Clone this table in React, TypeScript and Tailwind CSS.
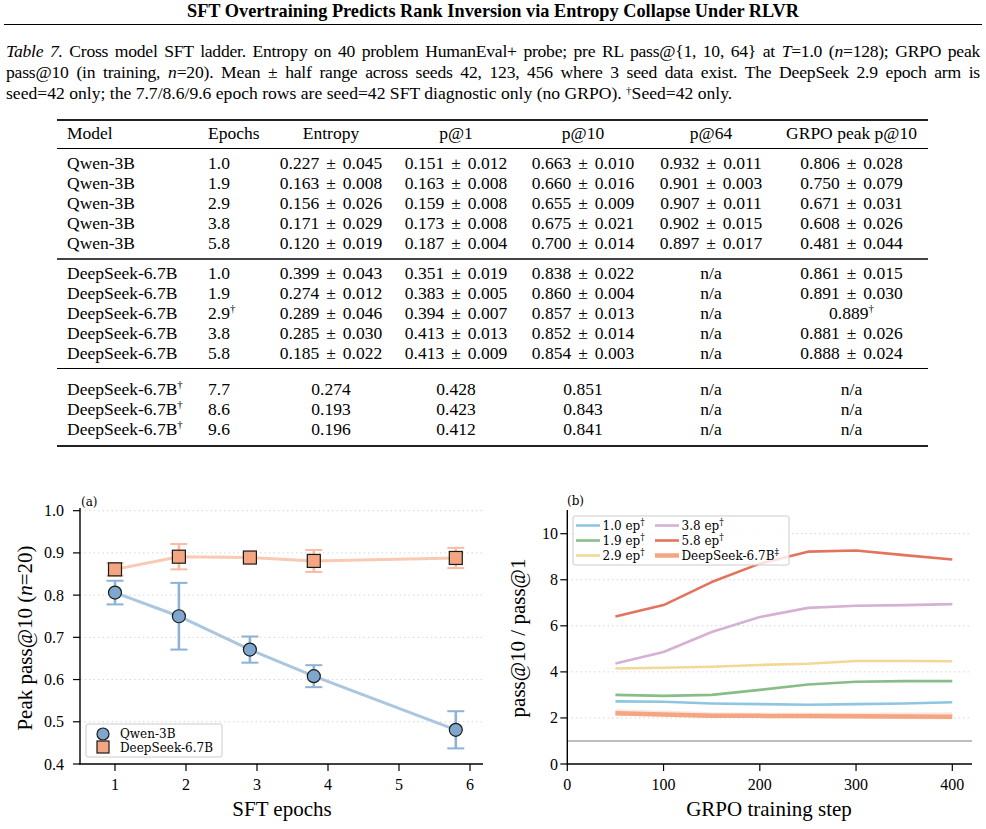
import React from "react";

const SERIF = "Liberation Serif, serif";
const DJ = "DejaVu Serif, serif";

function PM() {
  return <span className="mx-[7px]">±</span>;
}

function Val({ v, e }: { v: string; e?: string }) {
  if (!e) return <>{v}</>;
  return (
    <>
      {v}
      <PM />
      {e}
    </>
  );
}

type Row = {
  model: React.ReactNode;
  ep: React.ReactNode;
  cells: React.ReactNode[];
};

const GRID = "grid grid-cols-[141px_71px_124px_126px_128px_128px_153px] h-[20px] leading-[20px] text-[17.5px]";

function TRow({ r }: { r: Row }) {
  return (
    <div className={GRID}>
      <div className="pl-[10px] whitespace-nowrap">{r.model}</div>
      <div className="pl-[10px] whitespace-nowrap">{r.ep}</div>
      {r.cells.map((c, i) => (
        <div key={i} className="text-center whitespace-nowrap">
          {c}
        </div>
      ))}
    </div>
  );
}

const dag = <sup className="text-[11px] top-[-0.6em]">†</sup>;

const qwenRows: Row[] = [
  ["1.0", "0.227", "0.045", "0.151", "0.012", "0.663", "0.010", "0.932", "0.011", "0.806", "0.028"],
  ["1.9", "0.163", "0.008", "0.163", "0.008", "0.660", "0.016", "0.901", "0.003", "0.750", "0.079"],
  ["2.9", "0.156", "0.026", "0.159", "0.008", "0.655", "0.009", "0.907", "0.011", "0.671", "0.031"],
  ["3.8", "0.171", "0.029", "0.173", "0.008", "0.675", "0.021", "0.902", "0.015", "0.608", "0.026"],
  ["5.8", "0.120", "0.019", "0.187", "0.004", "0.700", "0.014", "0.897", "0.017", "0.481", "0.044"],
].map((a) => ({
  model: "Qwen-3B",
  ep: a[0],
  cells: [
    <Val v={a[1]} e={a[2]} />,
    <Val v={a[3]} e={a[4]} />,
    <Val v={a[5]} e={a[6]} />,
    <Val v={a[7]} e={a[8]} />,
    <Val v={a[9]} e={a[10]} />,
  ],
}));

const dsRaw = [
  ["1.0", "0.399", "0.043", "0.351", "0.019", "0.838", "0.022", "0.861", "0.015"],
  ["1.9", "0.274", "0.012", "0.383", "0.005", "0.860", "0.004", "0.891", "0.030"],
  ["2.9", "0.289", "0.046", "0.394", "0.007", "0.857", "0.013", "0.889", ""],
  ["3.8", "0.285", "0.030", "0.413", "0.013", "0.852", "0.014", "0.881", "0.026"],
  ["5.8", "0.185", "0.022", "0.413", "0.009", "0.854", "0.003", "0.888", "0.024"],
];
const dsRows: Row[] = dsRaw.map((a) => ({
  model: "DeepSeek-6.7B",
  ep: a[0] === "2.9" ? (
    <>
      2.9{dag}
    </>
  ) : (
    a[0]
  ),
  cells: [
    <Val v={a[1]} e={a[2]} />,
    <Val v={a[3]} e={a[4]} />,
    <Val v={a[5]} e={a[6]} />,
    "n/a",
    a[8] ? (
      <Val v={a[7]} e={a[8]} />
    ) : (
      <>
        {a[7]}
        {dag}
      </>
    ),
  ],
}));

const diagRows: Row[] = [
  ["7.7", "0.274", "0.428", "0.851"],
  ["8.6", "0.193", "0.423", "0.843"],
  ["9.6", "0.196", "0.412", "0.841"],
].map((a) => ({
  model: (
    <>
      DeepSeek-6.7B{dag}
    </>
  ),
  ep: a[0],
  cells: [a[1], a[2], a[3], "n/a", "n/a"],
}));

function ChartA() {
  const xa = (v: number) => 115 + (v - 1) * 71;
  const ya = (v: number) => 766 - (v - 0.4) * 422.2;
  const qwen = [
    [1, 0.806, 0.028],
    [1.9, 0.75, 0.079],
    [2.9, 0.671, 0.031],
    [3.8, 0.608, 0.026],
    [5.8, 0.481, 0.044],
  ];
  const ds = [
    [1, 0.861, 0.015],
    [1.9, 0.891, 0.03],
    [2.9, 0.889, 0],
    [3.8, 0.881, 0.026],
    [5.8, 0.888, 0.024],
  ];
  const yt = [0.4, 0.5, 0.6, 0.7, 0.8, 0.9, 1.0];
  const xt = [1, 2, 3, 4, 5, 6];
  const pts = (d: number[][]) => d.map((p) => `${xa(p[0])},${ya(p[1])}`).join(" ");
  return (
    <svg width={493} height={345} viewBox="0 484 493 345" className="block shrink-0">
      {yt.slice(1).map((v) => (
        <line key={v} x1={80} x2={483} y1={ya(v)} y2={ya(v)} stroke="#d6d6d6" strokeWidth={1} strokeDasharray="1.5 3" />
      ))}
      {qwen.map((p, i) =>
        p[2] > 0 ? (
          <g key={i} stroke="#8db2d6" strokeWidth={2.6}>
            <line x1={xa(p[0])} x2={xa(p[0])} y1={ya(p[1] - p[2])} y2={ya(p[1] + p[2])} />
            <line x1={xa(p[0]) - 8.5} x2={xa(p[0]) + 8.5} y1={ya(p[1] - p[2])} y2={ya(p[1] - p[2])} strokeWidth={2} />
            <line x1={xa(p[0]) - 8.5} x2={xa(p[0]) + 8.5} y1={ya(p[1] + p[2])} y2={ya(p[1] + p[2])} strokeWidth={2} />
          </g>
        ) : null
      )}
      <polyline points={pts(qwen)} fill="none" stroke="#abc7df" strokeWidth={3} />
      {ds.map((p, i) =>
        p[2] > 0 ? (
          <g key={i} stroke="#f7bca2" strokeWidth={2.6}>
            <line x1={xa(p[0])} x2={xa(p[0])} y1={ya(p[1] - p[2])} y2={ya(p[1] + p[2])} />
            <line x1={xa(p[0]) - 8.5} x2={xa(p[0]) + 8.5} y1={ya(p[1] - p[2])} y2={ya(p[1] - p[2])} strokeWidth={2} />
            <line x1={xa(p[0]) - 8.5} x2={xa(p[0]) + 8.5} y1={ya(p[1] + p[2])} y2={ya(p[1] + p[2])} strokeWidth={2} />
          </g>
        ) : null
      )}
      <polyline points={pts(ds)} fill="none" stroke="#f9c9b4" strokeWidth={3} />
      {qwen.map((p, i) => (
        <circle key={i} cx={xa(p[0])} cy={ya(p[1])} r={6.5} fill="#7fa7cd" stroke="#1a1a1a" strokeWidth={1.2} />
      ))}
      {ds.map((p, i) => (
        <rect key={i} x={xa(p[0]) - 6.5} y={ya(p[1]) - 6.5} width={13} height={13} fill="#f4a582" stroke="#1a1a1a" strokeWidth={1.2} />
      ))}
      <line x1={80} x2={80} y1={510} y2={766.5} stroke="#000" strokeWidth={1.4} />
      <line x1={79.3} x2={483} y1={766} y2={766} stroke="#000" strokeWidth={1.4} />
      {yt.map((v) => (
        <g key={v}>
          <line x1={73} x2={80} y1={ya(v)} y2={ya(v)} stroke="#000" strokeWidth={1.2} />
          <text x={64} y={ya(v) + 5.5} textAnchor="end" fontFamily={SERIF} fontSize={16}>
            {v.toFixed(1)}
          </text>
        </g>
      ))}
      {xt.map((v) => (
        <g key={v}>
          <line x1={xa(v)} x2={xa(v)} y1={766} y2={773} stroke="#000" strokeWidth={1.2} />
          <text x={xa(v)} y={792} textAnchor="middle" fontFamily={SERIF} fontSize={16}>
            {v}
          </text>
        </g>
      ))}
      <text x={282} y={818} textAnchor="middle" fontFamily={SERIF} fontSize={21}>
        SFT epochs
      </text>
      <text x={0} y={0} transform="translate(32,640) rotate(-90)" textAnchor="middle" fontFamily={SERIF} fontSize={21}>
        Peak pass@10 (<tspan fontStyle="italic">n</tspan>=20)
      </text>
      <text x={81} y={508} fontFamily={DJ} fontSize={12}>
        (a)
      </text>
      <rect x={86} y={726} width={136} height={33} rx={2} fill="#fff" fillOpacity={0.85} stroke="#cccccc" strokeWidth={1} />
      <circle cx={103} cy={736} r={6} fill="#7fa7cd" stroke="#1a1a1a" strokeWidth={1.2} />
      <rect x={97} y={743} width={12} height={12} fill="#f4a582" stroke="#1a1a1a" strokeWidth={1.2} />
      <text x={120} y={740} fontFamily={DJ} fontSize={12}>
        Qwen-3B
      </text>
      <text x={120} y={753.5} fontFamily={DJ} fontSize={12}>
        DeepSeek-6.7B
      </text>
    </svg>
  );
}

function ChartB() {
  const xb = (v: number) => 567.3 + v * 0.9625;
  const yb = (v: number) => 766 - v * 23.03;
  const steps = [50, 100, 150, 200, 250, 300, 350, 400];
  const series: { c: string; d: number[]; w: number }[] = [
    { c: "#e3735d", d: [6.4, 6.9, 7.9, 8.7, 9.22, 9.27, 9.07, 8.88], w: 2.6 },
    { c: "#d5b1d3", d: [4.36, 4.86, 5.73, 6.38, 6.78, 6.87, 6.9, 6.94], w: 2.6 },
    { c: "#f1d894", d: [4.15, 4.18, 4.22, 4.3, 4.35, 4.47, 4.47, 4.46], w: 2.6 },
    { c: "#88bd88", d: [3.0, 2.96, 3.0, 3.22, 3.45, 3.57, 3.6, 3.6], w: 2.6 },
    { c: "#8ec6e2", d: [2.72, 2.7, 2.63, 2.6, 2.57, 2.6, 2.63, 2.68], w: 2.6 },
  ];
  const dsd = [2.2, 2.15, 2.1, 2.09, 2.08, 2.07, 2.06, 2.05];
  const band = [0.18, 0.17, 0.15, 0.14, 0.14, 0.15, 0.18, 0.2];
  const line = (d: number[]) => d.map((v, i) => `${xb(steps[i])},${yb(v)}`).join(" ");
  const bandPts =
    dsd.map((v, i) => `${xb(steps[i])},${yb(v + band[i])}`).join(" ") +
    " " +
    dsd
      .map((v, i) => `${xb(steps[i])},${yb(v - band[i] * 0.6)}`)
      .reverse()
      .join(" ");
  const yt = [0, 2, 4, 6, 8, 10];
  const xt = [0, 100, 200, 300, 400];
  const leg: { c: string; t: React.ReactNode; x: number; y: number; w: number }[] = [
    { c: "#8ec6e2", t: "1.0 ep", x: 576, y: 527.5, w: 2.6 },
    { c: "#88bd88", t: "1.9 ep", x: 576, y: 542.5, w: 2.6 },
    { c: "#f1d894", t: "2.9 ep", x: 576, y: 557.5, w: 2.6 },
    { c: "#d5b1d3", t: "3.8 ep", x: 655, y: 527.5, w: 2.6 },
    { c: "#e3735d", t: "5.8 ep", x: 655, y: 542.5, w: 2.6 },
    { c: "#f4a582", t: "DeepSeek-6.7B", x: 655, y: 557.5, w: 4.5 },
  ];
  return (
    <svg width={493} height={345} viewBox="493 484 493 345" className="block shrink-0">
      {yt.slice(1).map((v) => (
        <line key={v} x1={567} x2={972} y1={yb(v)} y2={yb(v)} stroke="#d6d6d6" strokeWidth={1} strokeDasharray="1.5 3" />
      ))}
      <line x1={567} x2={972} y1={yb(1)} y2={yb(1)} stroke="#bdbdbd" strokeWidth={2} />
      <polygon points={bandPts} fill="#f4a582" fillOpacity={0.25} />
      {series.map((s, i) => (
        <polyline key={i} points={line(s.d)} fill="none" stroke={s.c} strokeWidth={s.w} strokeLinejoin="round" />
      ))}
      <polyline points={line(dsd)} fill="none" stroke="#f4a582" strokeWidth={4.5} strokeLinejoin="round" />
      <rect x={573} y={518} width={216} height={49} rx={2} fill="#fff" fillOpacity={0.8} stroke="#cccccc" strokeWidth={1} />
      {leg.map((l, i) => (
        <g key={i}>
          <line x1={l.x} x2={l.x + 24} y1={l.y} y2={l.y} stroke={l.c} strokeWidth={l.w} />
          <text x={l.x + 26.5} y={l.y + 4} fontFamily={DJ} fontSize={12}>
            {l.t}
            <tspan fontSize={9} dy={-5}>
              {i === 5 ? "‡" : "†"}
            </tspan>
          </text>
        </g>
      ))}
      <line x1={567.3} x2={567.3} y1={512} y2={766.5} stroke="#000" strokeWidth={1.4} />
      <line x1={566.6} x2={972} y1={766} y2={766} stroke="#000" strokeWidth={1.4} />
      {yt.map((v) => (
        <g key={v}>
          <line x1={560.3} x2={567.3} y1={yb(v)} y2={yb(v)} stroke="#000" strokeWidth={1.2} />
          <text x={558} y={yb(v) + 5.5} textAnchor="end" fontFamily={SERIF} fontSize={16}>
            {v}
          </text>
        </g>
      ))}
      {xt.map((v) => (
        <g key={v}>
          <line x1={xb(v)} x2={xb(v)} y1={766} y2={773} stroke="#000" strokeWidth={1.2} />
          <text x={xb(v)} y={792} textAnchor="middle" fontFamily={SERIF} fontSize={16}>
            {v}
          </text>
        </g>
      ))}
      <text x={769} y={818} textAnchor="middle" fontFamily={SERIF} fontSize={21}>
        GRPO training step
      </text>
      <text x={0} y={0} transform="translate(525,640) rotate(-90)" textAnchor="middle" fontFamily={SERIF} fontSize={21}>
        pass@10 / pass@1
      </text>
      <text x={567} y={507} fontFamily={DJ} fontSize={12}>
        (b)
      </text>
    </svg>
  );
}

export default function App() {
  return (
    <div className="w-[986px] h-[829px] overflow-hidden bg-white text-black font-['Liberation_Serif',serif]">
      <div className="mx-[4px] h-[25px] flex items-center justify-center text-[18.3px] font-bold border-b-[1.5px] border-black">
        SFT Overtraining Predicts Rank Inversion via Entropy Collapse Under RLVR
      </div>
      <div className="mt-[16px] px-[6px] text-[17.6px] leading-[21px]">
        <div className="text-justify [text-align-last:justify] whitespace-nowrap tracking-[-0.25px]">
          <i>Table 7.</i> Cross model SFT ladder. Entropy on 40 problem HumanEval+ probe; pre RL pass@{"{"}1, 10, 64{"}"} at{" "}
          <i>T</i>=1.0 (<i>n</i>=128); GRPO peak
        </div>
        <div className="text-justify [text-align-last:justify] whitespace-nowrap tracking-[-0.2px]">
          pass@10 (in training, <i>n</i>=20). Mean ± half range across seeds 42, 123, 456 where 3 seed data exist. The DeepSeek
          2.9 epoch arm is
        </div>
        <div className="whitespace-nowrap">
          seed=42 only; the 7.7/8.6/9.6 epoch rows are seed=42 SFT diagnostic only (no GRPO).{" "}
          <sup className="text-[11px]">†</sup>Seed=42 only.
        </div>
      </div>
      <div className="mt-[15px] ml-[57px] w-[871px]">
        <div className="h-[2px] bg-[#222]" />
        <div className="h-[2px]" />
        <TRow r={{ model: "Model", ep: "Epochs", cells: ["Entropy", "p@1", "p@10", "p@64", "GRPO peak p@10"] }} />
        <div className="h-[5px]" />
        <div className="h-px bg-black" />
        <div className="h-[4px]" />
        {qwenRows.map((r, i) => (
          <TRow key={i} r={r} />
        ))}
        <div className="h-[5px]" />
        <div className="h-[1.5px] bg-[#444]" />
        <div className="h-[3.5px]" />
        {dsRows.map((r, i) => (
          <TRow key={i} r={r} />
        ))}
        <div className="h-[5px]" />
        <div className="h-px bg-black" />
        <div className="h-[10px]" />
        {diagRows.map((r, i) => (
          <TRow key={i} r={r} />
        ))}
        <div className="h-[6px]" />
        <div className="h-[2px] bg-[#222]" />
      </div>
      <div className="mt-[35px] flex">
        <ChartA />
        <ChartB />
      </div>
    </div>
  );
}
